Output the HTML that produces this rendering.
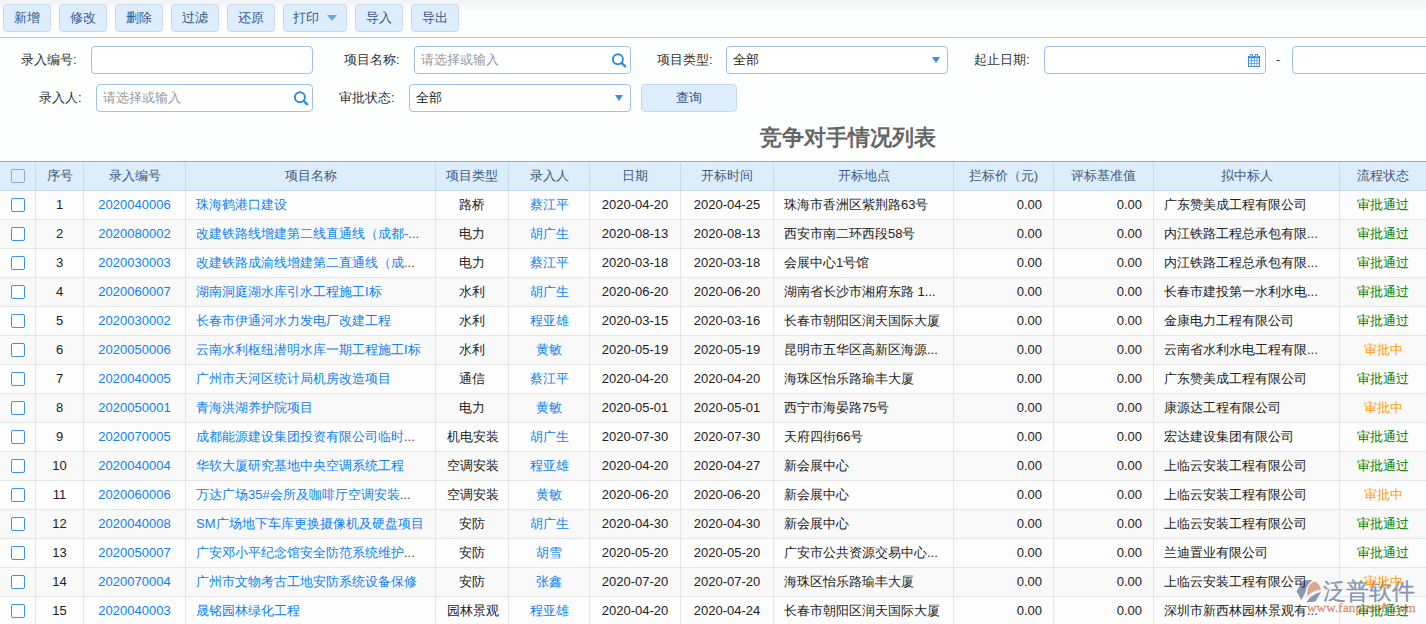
<!DOCTYPE html><html><head><meta charset="utf-8"><style>
*{margin:0;padding:0;box-sizing:border-box}
html,body{width:1426px;height:624px;overflow:hidden;background:#fdfefe;font-family:"Liberation Sans",sans-serif;font-size:13px;color:#222}
.topbg{position:absolute;left:0;top:0;width:1426px;height:37px;background:linear-gradient(#f3f4f4 0,#f3f4f4 3px,#f8f8f8 6px,#fafafa 9px,#fcfdfd 11px,#fcfdfd)}
.tline{position:absolute;left:0;top:37px;width:1426px;height:1px;background:#a9cbe6}
.btn{position:absolute;top:4px;height:28px;border:1px solid #c5daee;border-radius:4px;background:#deedfb;color:#33598a;text-align:center;line-height:26px;font-size:13px}
.caret{display:inline-block;width:0;height:0;border-left:5px solid transparent;border-right:5px solid transparent;border-top:6px solid #6ea7dd;vertical-align:middle;margin-left:8px;margin-top:-2px}
.lbl{position:absolute;height:20px;line-height:19px;color:#333;font-size:13px;white-space:nowrap}
.inp{position:absolute;height:28px;border:1px solid #a0c2e4;border-radius:4px;background:#fff}
.ph{position:absolute;left:6px;top:0;line-height:26px;color:#999;font-size:13px;white-space:nowrap}
.val{position:absolute;left:6px;top:0;line-height:26px;color:#222;font-size:13px;white-space:nowrap}
.tri{position:absolute;width:0;height:0;border-left:4.5px solid transparent;border-right:4.5px solid transparent;border-top:6px solid #3a90e0}
.qbtn{position:absolute;left:641px;top:84px;width:96px;height:28px;border:1px solid #c5daee;border-radius:4px;background:#deedfb;color:#33598a;text-align:center;line-height:26px}
.title{position:absolute;left:760px;top:124px;font-size:22px;font-weight:bold;color:#666;white-space:nowrap;line-height:28px}
.hdr{position:absolute;left:0;top:161px;width:1426px;height:30px;background:#deedfb;border-top:1px solid #78b4e6;border-bottom:1px solid #c2d9ed}
.vh{position:absolute;top:162px;height:28px;width:1px;background:#c5dcee}
.vb{position:absolute;top:191px;height:433px;width:1px;background:#e5e5e5}
.row{position:absolute;left:0;width:1426px;height:29px;border-bottom:1px solid #e5e5e5}
.cell{position:absolute;z-index:2;top:0;height:28px;line-height:28px;white-space:nowrap;overflow:hidden;padding:0 11px}
.hc{position:absolute;top:162px;height:28px;line-height:28px;white-space:nowrap;color:#3b5b7e;text-align:center}
.c{text-align:center}.l{text-align:left;padding-left:10px}.r{text-align:right}
.blue{color:#0e82ee}
.green{color:#008000}
.orange{color:#ff9f00}
.cb{position:absolute;left:11px;width:14px;height:14px;border:1px solid #3e92e0;border-radius:2px;background:#fff}
.wm{position:absolute;left:1296px;top:578px;width:130px;height:46px}
</style></head><body>
<div class="topbg"></div><div class="tline"></div>
<div class="btn" style="left:3px;width:48px">新增</div>
<div class="btn" style="left:59px;width:48px">修改</div>
<div class="btn" style="left:115px;width:48px">删除</div>
<div class="btn" style="left:171px;width:48px">过滤</div>
<div class="btn" style="left:227px;width:48px">还原</div>
<div class="btn" style="left:283px;width:64px">打印<span class="caret"></span></div>
<div class="btn" style="left:355px;width:48px">导入</div>
<div class="btn" style="left:411px;width:48px">导出</div>
<div class="lbl" style="left:21px;top:50px">录入编号:</div>
<div class="inp" style="left:91px;top:46px;width:222px"></div>
<div class="lbl" style="left:344px;top:50px">项目名称:</div>
<div class="inp" style="left:414px;top:46px;width:217px"><span class="ph">请选择或输入</span><svg style="position:absolute;left:196px;top:6px" width="17" height="16" viewBox="0 0 17 16"><circle cx="6.9" cy="6.2" r="5" fill="none" stroke="#2f8de0" stroke-width="1.9"/><path d="M10.6 9.9 L14.2 13.4" stroke="#2f8de0" stroke-width="2.3" stroke-linecap="round"/></svg></div>
<div class="lbl" style="left:657px;top:50px">项目类型:</div>
<div class="inp" style="left:726px;top:46px;width:222px"><span class="val">全部</span><span class="tri" style="left:205px;top:10px"></span></div>
<div class="lbl" style="left:974px;top:50px">起止日期:</div>
<div class="inp" style="left:1044px;top:46px;width:222px"><svg style="position:absolute;left:203px;top:7px" width="13" height="14" viewBox="0 0 13 14"><rect x="0.5" y="2.5" width="11" height="10" fill="#fff" stroke="#3a8ee0"/><rect x="0" y="2" width="12" height="2.3" fill="#3a8ee0"/><path d="M0.5 6.6H11.5M0.5 9.5H11.5M3.5 4V12.5M6.3 4V12.5M9 4V12.5" stroke="#5d9fe4" stroke-width="0.9"/><rect x="2.2" y="0.5" width="2.2" height="2.5" fill="#fff" stroke="#3a8ee0" stroke-width="0.9"/><rect x="7.4" y="0.5" width="2.2" height="2.5" fill="#fff" stroke="#3a8ee0" stroke-width="0.9"/></svg></div>
<div class="lbl" style="left:1276px;top:50px">-</div>
<div class="inp" style="left:1292px;top:46px;width:160px"></div>
<div class="lbl" style="left:39px;top:88px">录入人:</div>
<div class="inp" style="left:96px;top:84px;width:217px"><span class="ph">请选择或输入</span><svg style="position:absolute;left:196px;top:6px" width="17" height="16" viewBox="0 0 17 16"><circle cx="6.9" cy="6.2" r="5" fill="none" stroke="#2f8de0" stroke-width="1.9"/><path d="M10.6 9.9 L14.2 13.4" stroke="#2f8de0" stroke-width="2.3" stroke-linecap="round"/></svg></div>
<div class="lbl" style="left:339px;top:88px">审批状态:</div>
<div class="inp" style="left:409px;top:84px;width:222px"><span class="val">全部</span><span class="tri" style="left:205px;top:10px"></span></div>
<div class="qbtn">查询</div>
<div class="title">竞争对手情况列表</div>
<div class="hdr"></div>
<div class="cb" style="top:169px;border-color:#7fb2e2;background:transparent"></div>
<div class="vh" style="left:35px"></div>
<div class="hc" style="left:36px;width:47px">序号</div>
<div class="vh" style="left:83px"></div>
<div class="hc" style="left:84px;width:101px">录入编号</div>
<div class="vh" style="left:185px"></div>
<div class="hc" style="left:186px;width:249px">项目名称</div>
<div class="vh" style="left:435px"></div>
<div class="hc" style="left:436px;width:72px">项目类型</div>
<div class="vh" style="left:508px"></div>
<div class="hc" style="left:509px;width:80px">录入人</div>
<div class="vh" style="left:589px"></div>
<div class="hc" style="left:590px;width:90px">日期</div>
<div class="vh" style="left:680px"></div>
<div class="hc" style="left:681px;width:92px">开标时间</div>
<div class="vh" style="left:773px"></div>
<div class="hc" style="left:774px;width:179px">开标地点</div>
<div class="vh" style="left:953px"></div>
<div class="hc" style="left:954px;width:99px">拦标价（元)</div>
<div class="vh" style="left:1053px"></div>
<div class="hc" style="left:1054px;width:99px">评标基准值</div>
<div class="vh" style="left:1153px"></div>
<div class="hc" style="left:1154px;width:185px">拟中标人</div>
<div class="vh" style="left:1339px"></div>
<div class="hc" style="left:1340px;width:86px">流程状态</div>
<div class="row" style="top:191px;background:#fdfdfd">
<div class="cb" style="top:7px"></div>
<div class="cell c" style="left:36px;width:47px">1</div>
<div class="cell c blue" style="left:84px;width:101px">2020040006</div>
<div class="cell l blue" style="left:186px;width:249px">珠海鹤港口建设</div>
<div class="cell c" style="left:436px;width:72px">路桥</div>
<div class="cell c blue" style="left:509px;width:80px">蔡江平</div>
<div class="cell c" style="left:590px;width:90px">2020-04-20</div>
<div class="cell c" style="left:681px;width:92px">2020-04-25</div>
<div class="cell l" style="left:774px;width:179px">珠海市香洲区紫荆路63号</div>
<div class="cell r" style="left:954px;width:99px">0.00</div>
<div class="cell r" style="left:1054px;width:99px">0.00</div>
<div class="cell l" style="left:1154px;width:185px">广东赞美成工程有限公司</div>
<div class="cell c green" style="left:1340px;width:86px">审批通过</div>
</div>
<div class="row" style="top:220px;background:#f9f9f9">
<div class="cb" style="top:7px"></div>
<div class="cell c" style="left:36px;width:47px">2</div>
<div class="cell c blue" style="left:84px;width:101px">2020080002</div>
<div class="cell l blue" style="left:186px;width:249px">改建铁路线增建第二线直通线（成都-<span style="color:#4a4a4a">...</span></div>
<div class="cell c" style="left:436px;width:72px">电力</div>
<div class="cell c blue" style="left:509px;width:80px">胡广生</div>
<div class="cell c" style="left:590px;width:90px">2020-08-13</div>
<div class="cell c" style="left:681px;width:92px">2020-08-13</div>
<div class="cell l" style="left:774px;width:179px">西安市南二环西段58号</div>
<div class="cell r" style="left:954px;width:99px">0.00</div>
<div class="cell r" style="left:1054px;width:99px">0.00</div>
<div class="cell l" style="left:1154px;width:185px">内江铁路工程总承包有限...</div>
<div class="cell c green" style="left:1340px;width:86px">审批通过</div>
</div>
<div class="row" style="top:249px;background:#fdfdfd">
<div class="cb" style="top:7px"></div>
<div class="cell c" style="left:36px;width:47px">3</div>
<div class="cell c blue" style="left:84px;width:101px">2020030003</div>
<div class="cell l blue" style="left:186px;width:249px">改建铁路成渝线增建第二直通线（成<span style="color:#4a4a4a">...</span></div>
<div class="cell c" style="left:436px;width:72px">电力</div>
<div class="cell c blue" style="left:509px;width:80px">蔡江平</div>
<div class="cell c" style="left:590px;width:90px">2020-03-18</div>
<div class="cell c" style="left:681px;width:92px">2020-03-18</div>
<div class="cell l" style="left:774px;width:179px">会展中心1号馆</div>
<div class="cell r" style="left:954px;width:99px">0.00</div>
<div class="cell r" style="left:1054px;width:99px">0.00</div>
<div class="cell l" style="left:1154px;width:185px">内江铁路工程总承包有限...</div>
<div class="cell c green" style="left:1340px;width:86px">审批通过</div>
</div>
<div class="row" style="top:278px;background:#f9f9f9">
<div class="cb" style="top:7px"></div>
<div class="cell c" style="left:36px;width:47px">4</div>
<div class="cell c blue" style="left:84px;width:101px">2020060007</div>
<div class="cell l blue" style="left:186px;width:249px">湖南洞庭湖水库引水工程施工I标</div>
<div class="cell c" style="left:436px;width:72px">水利</div>
<div class="cell c blue" style="left:509px;width:80px">胡广生</div>
<div class="cell c" style="left:590px;width:90px">2020-06-20</div>
<div class="cell c" style="left:681px;width:92px">2020-06-20</div>
<div class="cell l" style="left:774px;width:179px">湖南省长沙市湘府东路 1...</div>
<div class="cell r" style="left:954px;width:99px">0.00</div>
<div class="cell r" style="left:1054px;width:99px">0.00</div>
<div class="cell l" style="left:1154px;width:185px">长春市建投第一水利水电...</div>
<div class="cell c green" style="left:1340px;width:86px">审批通过</div>
</div>
<div class="row" style="top:307px;background:#fdfdfd">
<div class="cb" style="top:7px"></div>
<div class="cell c" style="left:36px;width:47px">5</div>
<div class="cell c blue" style="left:84px;width:101px">2020030002</div>
<div class="cell l blue" style="left:186px;width:249px">长春市伊通河水力发电厂改建工程</div>
<div class="cell c" style="left:436px;width:72px">水利</div>
<div class="cell c blue" style="left:509px;width:80px">程亚雄</div>
<div class="cell c" style="left:590px;width:90px">2020-03-15</div>
<div class="cell c" style="left:681px;width:92px">2020-03-16</div>
<div class="cell l" style="left:774px;width:179px">长春市朝阳区润天国际大厦</div>
<div class="cell r" style="left:954px;width:99px">0.00</div>
<div class="cell r" style="left:1054px;width:99px">0.00</div>
<div class="cell l" style="left:1154px;width:185px">金康电力工程有限公司</div>
<div class="cell c green" style="left:1340px;width:86px">审批通过</div>
</div>
<div class="row" style="top:336px;background:#f9f9f9">
<div class="cb" style="top:7px"></div>
<div class="cell c" style="left:36px;width:47px">6</div>
<div class="cell c blue" style="left:84px;width:101px">2020050006</div>
<div class="cell l blue" style="left:186px;width:249px">云南水利枢纽潜明水库一期工程施工I标</div>
<div class="cell c" style="left:436px;width:72px">水利</div>
<div class="cell c blue" style="left:509px;width:80px">黄敏</div>
<div class="cell c" style="left:590px;width:90px">2020-05-19</div>
<div class="cell c" style="left:681px;width:92px">2020-05-19</div>
<div class="cell l" style="left:774px;width:179px">昆明市五华区高新区海源...</div>
<div class="cell r" style="left:954px;width:99px">0.00</div>
<div class="cell r" style="left:1054px;width:99px">0.00</div>
<div class="cell l" style="left:1154px;width:185px">云南省水利水电工程有限...</div>
<div class="cell c orange" style="left:1340px;width:86px">审批中</div>
</div>
<div class="row" style="top:365px;background:#fdfdfd">
<div class="cb" style="top:7px"></div>
<div class="cell c" style="left:36px;width:47px">7</div>
<div class="cell c blue" style="left:84px;width:101px">2020040005</div>
<div class="cell l blue" style="left:186px;width:249px">广州市天河区统计局机房改造项目</div>
<div class="cell c" style="left:436px;width:72px">通信</div>
<div class="cell c blue" style="left:509px;width:80px">蔡江平</div>
<div class="cell c" style="left:590px;width:90px">2020-04-20</div>
<div class="cell c" style="left:681px;width:92px">2020-04-20</div>
<div class="cell l" style="left:774px;width:179px">海珠区怡乐路瑜丰大厦</div>
<div class="cell r" style="left:954px;width:99px">0.00</div>
<div class="cell r" style="left:1054px;width:99px">0.00</div>
<div class="cell l" style="left:1154px;width:185px">广东赞美成工程有限公司</div>
<div class="cell c green" style="left:1340px;width:86px">审批通过</div>
</div>
<div class="row" style="top:394px;background:#f9f9f9">
<div class="cb" style="top:7px"></div>
<div class="cell c" style="left:36px;width:47px">8</div>
<div class="cell c blue" style="left:84px;width:101px">2020050001</div>
<div class="cell l blue" style="left:186px;width:249px">青海洪湖养护院项目</div>
<div class="cell c" style="left:436px;width:72px">电力</div>
<div class="cell c blue" style="left:509px;width:80px">黄敏</div>
<div class="cell c" style="left:590px;width:90px">2020-05-01</div>
<div class="cell c" style="left:681px;width:92px">2020-05-01</div>
<div class="cell l" style="left:774px;width:179px">西宁市海晏路75号</div>
<div class="cell r" style="left:954px;width:99px">0.00</div>
<div class="cell r" style="left:1054px;width:99px">0.00</div>
<div class="cell l" style="left:1154px;width:185px">康源达工程有限公司</div>
<div class="cell c orange" style="left:1340px;width:86px">审批中</div>
</div>
<div class="row" style="top:423px;background:#fdfdfd">
<div class="cb" style="top:7px"></div>
<div class="cell c" style="left:36px;width:47px">9</div>
<div class="cell c blue" style="left:84px;width:101px">2020070005</div>
<div class="cell l blue" style="left:186px;width:249px">成都能源建设集团投资有限公司临时<span style="color:#4a4a4a">...</span></div>
<div class="cell c" style="left:436px;width:72px">机电安装</div>
<div class="cell c blue" style="left:509px;width:80px">胡广生</div>
<div class="cell c" style="left:590px;width:90px">2020-07-30</div>
<div class="cell c" style="left:681px;width:92px">2020-07-30</div>
<div class="cell l" style="left:774px;width:179px">天府四街66号</div>
<div class="cell r" style="left:954px;width:99px">0.00</div>
<div class="cell r" style="left:1054px;width:99px">0.00</div>
<div class="cell l" style="left:1154px;width:185px">宏达建设集团有限公司</div>
<div class="cell c green" style="left:1340px;width:86px">审批通过</div>
</div>
<div class="row" style="top:452px;background:#f9f9f9">
<div class="cb" style="top:7px"></div>
<div class="cell c" style="left:36px;width:47px">10</div>
<div class="cell c blue" style="left:84px;width:101px">2020040004</div>
<div class="cell l blue" style="left:186px;width:249px">华软大厦研究基地中央空调系统工程</div>
<div class="cell c" style="left:436px;width:72px">空调安装</div>
<div class="cell c blue" style="left:509px;width:80px">程亚雄</div>
<div class="cell c" style="left:590px;width:90px">2020-04-20</div>
<div class="cell c" style="left:681px;width:92px">2020-04-27</div>
<div class="cell l" style="left:774px;width:179px">新会展中心</div>
<div class="cell r" style="left:954px;width:99px">0.00</div>
<div class="cell r" style="left:1054px;width:99px">0.00</div>
<div class="cell l" style="left:1154px;width:185px">上临云安装工程有限公司</div>
<div class="cell c green" style="left:1340px;width:86px">审批通过</div>
</div>
<div class="row" style="top:481px;background:#fdfdfd">
<div class="cb" style="top:7px"></div>
<div class="cell c" style="left:36px;width:47px">11</div>
<div class="cell c blue" style="left:84px;width:101px">2020060006</div>
<div class="cell l blue" style="left:186px;width:249px">万达广场35#会所及咖啡厅空调安装<span style="color:#4a4a4a">...</span></div>
<div class="cell c" style="left:436px;width:72px">空调安装</div>
<div class="cell c blue" style="left:509px;width:80px">黄敏</div>
<div class="cell c" style="left:590px;width:90px">2020-06-20</div>
<div class="cell c" style="left:681px;width:92px">2020-06-20</div>
<div class="cell l" style="left:774px;width:179px">新会展中心</div>
<div class="cell r" style="left:954px;width:99px">0.00</div>
<div class="cell r" style="left:1054px;width:99px">0.00</div>
<div class="cell l" style="left:1154px;width:185px">上临云安装工程有限公司</div>
<div class="cell c orange" style="left:1340px;width:86px">审批中</div>
</div>
<div class="row" style="top:510px;background:#f9f9f9">
<div class="cb" style="top:7px"></div>
<div class="cell c" style="left:36px;width:47px">12</div>
<div class="cell c blue" style="left:84px;width:101px">2020040008</div>
<div class="cell l blue" style="left:186px;width:249px">SM广场地下车库更换摄像机及硬盘项目</div>
<div class="cell c" style="left:436px;width:72px">安防</div>
<div class="cell c blue" style="left:509px;width:80px">胡广生</div>
<div class="cell c" style="left:590px;width:90px">2020-04-30</div>
<div class="cell c" style="left:681px;width:92px">2020-04-30</div>
<div class="cell l" style="left:774px;width:179px">新会展中心</div>
<div class="cell r" style="left:954px;width:99px">0.00</div>
<div class="cell r" style="left:1054px;width:99px">0.00</div>
<div class="cell l" style="left:1154px;width:185px">上临云安装工程有限公司</div>
<div class="cell c green" style="left:1340px;width:86px">审批通过</div>
</div>
<div class="row" style="top:539px;background:#fdfdfd">
<div class="cb" style="top:7px"></div>
<div class="cell c" style="left:36px;width:47px">13</div>
<div class="cell c blue" style="left:84px;width:101px">2020050007</div>
<div class="cell l blue" style="left:186px;width:249px">广安邓小平纪念馆安全防范系统维护<span style="color:#4a4a4a">...</span></div>
<div class="cell c" style="left:436px;width:72px">安防</div>
<div class="cell c blue" style="left:509px;width:80px">胡雪</div>
<div class="cell c" style="left:590px;width:90px">2020-05-20</div>
<div class="cell c" style="left:681px;width:92px">2020-05-20</div>
<div class="cell l" style="left:774px;width:179px">广安市公共资源交易中心...</div>
<div class="cell r" style="left:954px;width:99px">0.00</div>
<div class="cell r" style="left:1054px;width:99px">0.00</div>
<div class="cell l" style="left:1154px;width:185px">兰迪置业有限公司</div>
<div class="cell c green" style="left:1340px;width:86px">审批通过</div>
</div>
<div class="row" style="top:568px;background:#f9f9f9">
<div class="cb" style="top:7px"></div>
<div class="cell c" style="left:36px;width:47px">14</div>
<div class="cell c blue" style="left:84px;width:101px">2020070004</div>
<div class="cell l blue" style="left:186px;width:249px">广州市文物考古工地安防系统设备保修</div>
<div class="cell c" style="left:436px;width:72px">安防</div>
<div class="cell c blue" style="left:509px;width:80px">张鑫</div>
<div class="cell c" style="left:590px;width:90px">2020-07-20</div>
<div class="cell c" style="left:681px;width:92px">2020-07-20</div>
<div class="cell l" style="left:774px;width:179px">海珠区怡乐路瑜丰大厦</div>
<div class="cell r" style="left:954px;width:99px">0.00</div>
<div class="cell r" style="left:1054px;width:99px">0.00</div>
<div class="cell l" style="left:1154px;width:185px">上临云安装工程有限公司</div>
<div class="cell c orange" style="left:1340px;width:86px">审批中</div>
</div>
<div class="row" style="top:597px;background:#fdfdfd">
<div class="cb" style="top:7px"></div>
<div class="cell c" style="left:36px;width:47px">15</div>
<div class="cell c blue" style="left:84px;width:101px">2020040003</div>
<div class="cell l blue" style="left:186px;width:249px">晟铭园林绿化工程</div>
<div class="cell c" style="left:436px;width:72px">园林景观</div>
<div class="cell c blue" style="left:509px;width:80px">程亚雄</div>
<div class="cell c" style="left:590px;width:90px">2020-04-20</div>
<div class="cell c" style="left:681px;width:92px">2020-04-24</div>
<div class="cell l" style="left:774px;width:179px">长春市朝阳区润天国际大厦</div>
<div class="cell r" style="left:954px;width:99px">0.00</div>
<div class="cell r" style="left:1054px;width:99px">0.00</div>
<div class="cell l" style="left:1154px;width:185px">深圳市新西林园林景观有...</div>
<div class="cell c green" style="left:1340px;width:86px">审批通过</div>
</div>
<div class="vb" style="left:35px"></div>
<div class="vb" style="left:83px"></div>
<div class="vb" style="left:185px"></div>
<div class="vb" style="left:435px"></div>
<div class="vb" style="left:508px"></div>
<div class="vb" style="left:589px"></div>
<div class="vb" style="left:680px"></div>
<div class="vb" style="left:773px"></div>
<div class="vb" style="left:953px"></div>
<div class="vb" style="left:1053px"></div>
<div class="vb" style="left:1153px"></div>
<div class="vb" style="left:1339px"></div>
<div style="position:absolute;z-index:1;left:1323px;top:578px;font-size:23px;line-height:26px;-webkit-text-stroke:0.35px rgba(125,140,165,0.9);color:rgba(125,140,165,0.9);white-space:nowrap">泛普软件</div>
<div style="position:absolute;z-index:1;left:1307px;top:601px;font-family:'Liberation Serif',serif;font-size:13px;line-height:14px;color:rgba(214,135,105,0.9);-webkit-text-stroke:0.3px rgba(214,135,105,0.9);white-space:nowrap;letter-spacing:0.2px">www.fanpusoft.com</div>
<svg style="position:absolute;z-index:1;left:1290px;top:575px" width="40" height="35" viewBox="0 0 40 35">
<path d="M6.5 16.5 L12.5 6 Q17 4.6 22.5 5 Q16.5 10 15.2 17.5 L11.5 25 Z" fill="#8a97ad"/>
<path d="M17 21 Q17 13 20 9.5 Q22.5 6.5 25.5 6.5 Q29.5 9 31.2 14.5 Q23 15.5 17 21 Z" fill="#e0a58e"/>
<path d="M16.3 27.5 Q21 19.5 31.2 16.8 L25.5 26.5 Z" fill="#8a97ad"/>
</svg>
</body></html>
